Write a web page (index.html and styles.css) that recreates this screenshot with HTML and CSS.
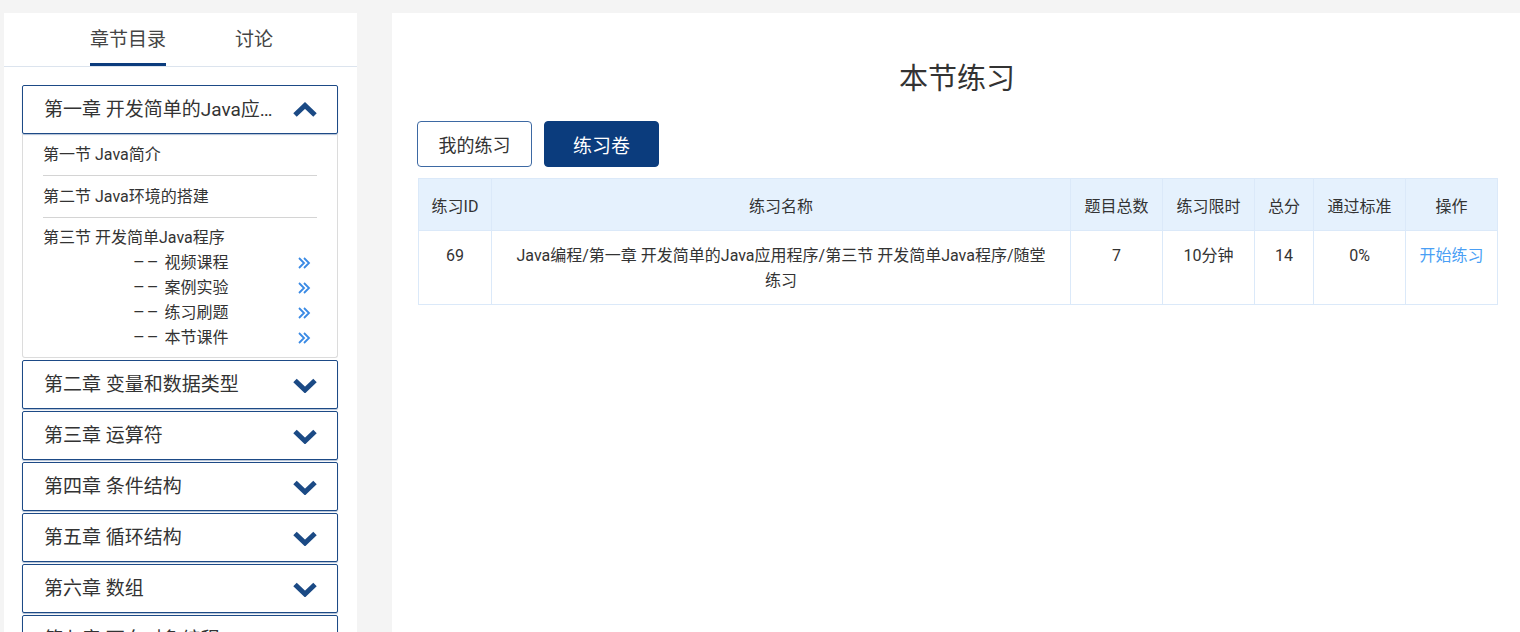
FILE: index.html
```html
<!DOCTYPE html>
<html>
    <head>
        <meta charset="utf-8">
        <title>本节练习</title>
        <link rel="stylesheet" href="styles.css">
    </head>
<body>
    <div class="sidebar">
        <div class="tabs">
            <div class="tab active">章节目录</div>
            <div class="tab">讨论</div>
        </div>

        <div class="chapters">
            <div class="chapter open">
                <div class="chapter-title">
                    <span class="chapter-name">第一章 开发简单的Java应用程序</span>
                    <svg class="chevron" viewBox="0 0 26 16"><polyline points="3,13 13,3.5 23,13"/></svg>
                </div>
                <div class="sections">
                    <div class="section">第一节 Java简介</div>
                    <div class="section">第二节 Java环境的搭建</div>
                    <div class="section last">
                        <div class="section-name">第三节 开发简单Java程序</div>
                        <div class="sub">
                            <span><span class="dash">––</span>&nbsp;视频课程</span>
                            <svg class="more" viewBox="0 0 14 14"><polyline points="2,2 7,7 2,12"/><polyline points="7,2 12,7 7,12"/></svg>
                        </div>
                        <div class="sub">
                            <span><span class="dash">––</span>&nbsp;案例实验</span>
                            <svg class="more" viewBox="0 0 14 14"><polyline points="2,2 7,7 2,12"/><polyline points="7,2 12,7 7,12"/></svg>
                        </div>
                        <div class="sub">
                            <span><span class="dash">––</span>&nbsp;练习刷题</span>
                            <svg class="more" viewBox="0 0 14 14"><polyline points="2,2 7,7 2,12"/><polyline points="7,2 12,7 7,12"/></svg>
                        </div>
                        <div class="sub">
                            <span><span class="dash">––</span>&nbsp;本节课件</span>
                            <svg class="more" viewBox="0 0 14 14"><polyline points="2,2 7,7 2,12"/><polyline points="7,2 12,7 7,12"/></svg>
                        </div>
                    </div>
                </div>
            </div>

            <div class="chapter">
                <div class="chapter-title">
                    <span class="chapter-name">第二章 变量和数据类型</span>
                    <svg class="chevron" viewBox="0 0 26 16"><polyline points="3,3.5 13,13 23,3.5"/></svg>
                </div>
            </div>
            <div class="chapter">
                <div class="chapter-title">
                    <span class="chapter-name">第三章 运算符</span>
                    <svg class="chevron" viewBox="0 0 26 16"><polyline points="3,3.5 13,13 23,3.5"/></svg>
                </div>
            </div>
            <div class="chapter">
                <div class="chapter-title">
                    <span class="chapter-name">第四章 条件结构</span>
                    <svg class="chevron" viewBox="0 0 26 16"><polyline points="3,3.5 13,13 23,3.5"/></svg>
                </div>
            </div>
            <div class="chapter">
                <div class="chapter-title">
                    <span class="chapter-name">第五章 循环结构</span>
                    <svg class="chevron" viewBox="0 0 26 16"><polyline points="3,3.5 13,13 23,3.5"/></svg>
                </div>
            </div>
            <div class="chapter">
                <div class="chapter-title">
                    <span class="chapter-name">第六章 数组</span>
                    <svg class="chevron" viewBox="0 0 26 16"><polyline points="3,3.5 13,13 23,3.5"/></svg>
                </div>
            </div>
            <div class="chapter">
                <div class="chapter-title">
                    <span class="chapter-name">第七章 面向对象编程</span>
                    <svg class="chevron" viewBox="0 0 26 16"><polyline points="3,3.5 13,13 23,3.5"/></svg>
                </div>
            </div>
        </div>
    </div>

    <div class="main">
        <h2 class="page-title">本节练习</h2>

        <div class="switch">
            <button class="btn">我的练习</button>
            <button class="btn primary">练习卷</button>
        </div>

        <table class="exercise-table">
            <colgroup>
                <col style="width: 73px">
                <col style="width: 579px">
                <col style="width: 92px">
                <col style="width: 92px">
                <col style="width: 59px">
                <col style="width: 92px">
                <col style="width: 92px">
            </colgroup>
            <thead>
                <tr>
                    <th>练习ID</th>
                    <th>练习名称</th>
                    <th>题目总数</th>
                    <th>练习限时</th>
                    <th>总分</th>
                    <th>通过标准</th>
                    <th>操作</th>
                </tr>
            </thead>
            <tbody>
                <tr>
                    <td>69</td>
                    <td class="name">Java编程/第一章 开发简单的Java应用程序/第三节 开发简单Java程序/随堂练习</td>
                    <td>7</td>
                    <td>10分钟</td>
                    <td>14</td>
                    <td>0%</td>
                    <td><a class="start" href="#">开始练习</a></td>
                </tr>
            </tbody>
        </table>
    </div>
</body>
</html>
```

FILE: styles.css
```css
body {
    font-family: Roboto, "Noto Sans CJK SC", sans-serif;
    margin: 0;
    padding: 13px 0 0 4px;
    display: flex;
    gap: 35px;
    background-color: #f4f4f4;
    height: 632px;
    box-sizing: border-box;
    overflow: hidden;
    color: #333;
}

/* left column */
.sidebar {
    width: 353px;
    flex-shrink: 0;
    background: #fff;
    overflow: hidden;
}

.tabs {
    display: flex;
    justify-content: center;
    gap: 69px;
    border-bottom: 1px solid #dce4ee;
    padding-left: 2px;
}

.tab {
    font-size: 19px;
    line-height: 28px;
    padding: 13px 0 9px;
    border-bottom: 3px solid transparent;
    color: #444;
}

.tab.active {
    border-bottom-color: #0b3c7d;
}

.chapters {
    padding: 18px 19px 0 18px;
    display: flex;
    flex-direction: column;
    gap: 2px;
}

.chapter-title {
    height: 49px;
    box-sizing: border-box;
    border: 1px solid #1d4a86;
    border-radius: 2px;
    box-shadow: 0 1px 1px rgba(29, 74, 134, 0.35);
    display: flex;
    align-items: center;
    justify-content: space-between;
    padding: 0 19px 0 21px;
    background: #fff;
}

.chapter-name {
    font-size: 19px;
    white-space: nowrap;
    overflow: hidden;
    text-overflow: ellipsis;
    max-width: 232px;
    line-height: 28px;
}

.chevron {
    width: 26px;
    height: 16px;
    flex-shrink: 0;
    fill: none;
    stroke: #1b4a85;
    stroke-width: 5;
    stroke-linejoin: miter;
}

.sections {
    border: 1px solid #dcdcdc;
    border-top: none;
    border-radius: 0 0 3px 3px;
    padding-bottom: 7px;
}

.section {
    font-size: 16px;
    line-height: 41px;
    margin: 0 20px 0 20px;
    border-bottom: 1px solid #d4d4d4;
}

.section.last {
    border-bottom: none;
    line-height: 24px;
    padding-top: 8px;
}

.sub {
    display: flex;
    align-items: center;
    justify-content: space-between;
    line-height: 25px;
    padding: 0 6px 0 90px;
}

.dash {
    font-size: 18px;
    line-height: 1;
    letter-spacing: 2px;
}

.more {
    width: 14px;
    height: 14px;
    fill: none;
    stroke: #3a8ae4;
    stroke-width: 1.8;
}

/* right column */
.main {
    flex: 1;
    min-width: 0;
    background: #fff;
    padding: 46px 23px 0 25px;
}

.page-title {
    margin: 0;
    text-align: center;
    font-size: 29px;
    font-weight: normal;
    line-height: 40px;
    color: #333;
}

.switch {
    display: flex;
    gap: 12px;
    margin-top: 22px;
}

.btn {
    width: 115px;
    height: 46px;
    border: 1px solid #3d69a3;
    border-radius: 4px;
    background: #fff;
    color: #333;
    font-family: Roboto, "Noto Sans CJK SC", sans-serif;
    font-size: 18px;
    cursor: pointer;
}

.btn.primary {
    background: #0b3c7d;
    border-color: #0b3c7d;
    color: #fff;
    font-size: 19px;
}

.exercise-table {
    margin-top: 11px;
    margin-left: 1px;
    width: 1079px;
    border-collapse: collapse;
    table-layout: fixed;
    font-size: 16px;
}

.exercise-table th {
    background: #e5f1fd;
    font-weight: normal;
    height: 51px;
    padding: 0;
    border: 1px solid #dbe9f9;
    color: #333;
}

.exercise-table td {
    border: 1px solid #dbe9f9;
    text-align: center;
    vertical-align: top;
    line-height: 25px;
    padding: 12px 6px 11px;
}

.exercise-table td.name {
    padding: 12px 22px 11px;
}

.start {
    color: #4a9ff5;
    text-decoration: none;
}
```
